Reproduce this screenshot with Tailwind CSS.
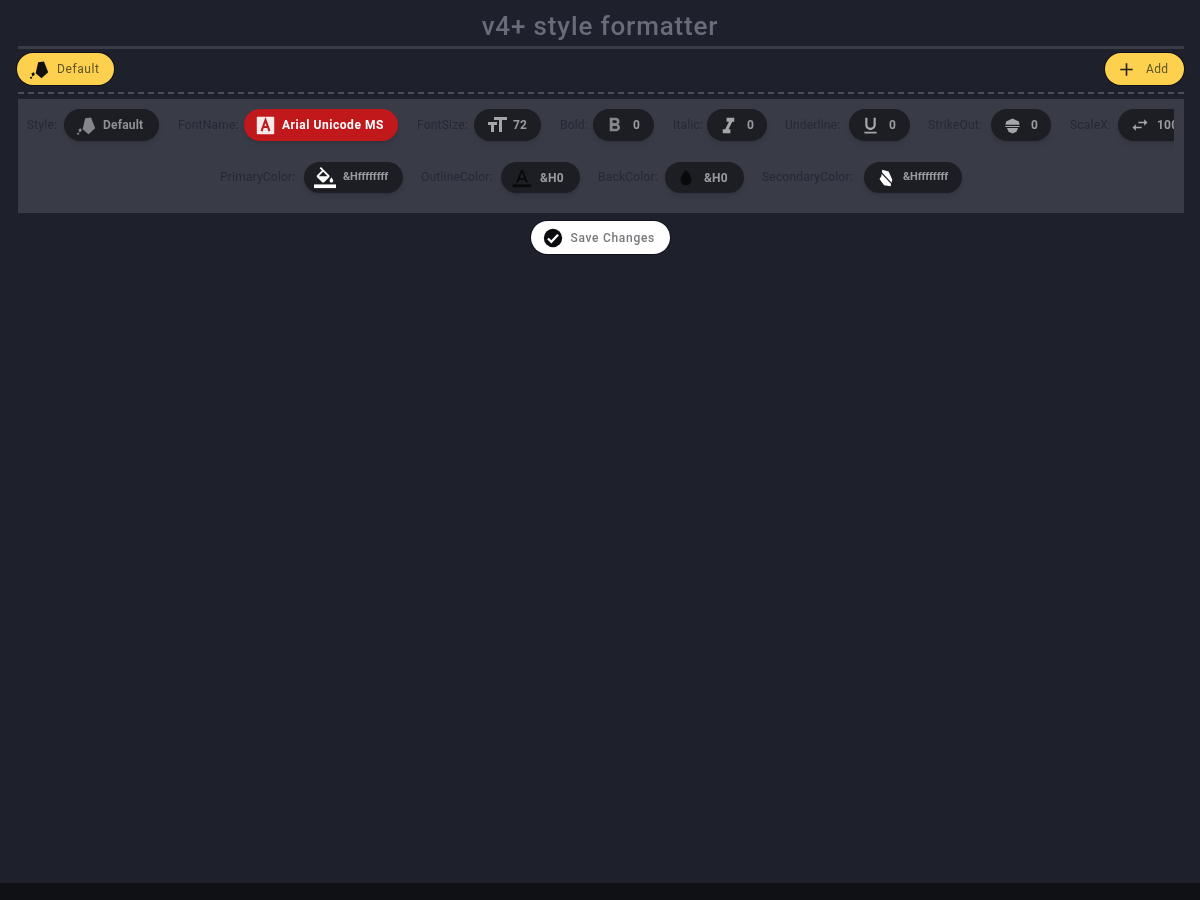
<!DOCTYPE html>
<html>
<head>
<meta charset="utf-8">
<title>v4+ style formatter</title>
<script src="https://cdn.jsdelivr.net/npm/@tailwindcss/browser@4"></script>
</head>
<body class="bg-[#1e202c] font-['Roboto',sans-serif]">
<div class="w-[1200px] h-[900px] flex flex-col overflow-hidden">
  <main class="flex-1 pl-[18px] pr-[16px] blur-[0.7px]">
    <h1 class="h-[46px] mr-[2px] pt-[8px] text-center text-[26px] leading-[36px] tracking-[0.85px] font-medium text-[#686b78]">v4+ style formatter</h1>
    <div class="h-[3px] bg-[#393b47]"></div>
    <div class="h-[40px] -ml-[1px] flex items-center justify-between">
      <button class="h-[32px] w-[97px] pl-[12px] rounded-full bg-[#fdd14d] flex items-center gap-[8px] text-[12px] tracking-[0.6px] text-[#5e5327] shadow-[0_0_0_1px_#10121c]">
        <svg class="w-[20px] h-[20px]" viewBox="0 0 24 24" fill="#111"><path d="M11 4L18 3L23 16L15 23L8 17zM3 17l3-1 1 3-3 2zM1 22l2-1 1 2-2 1z"/></svg>
        <span>Default</span>
      </button>
      <button class="h-[32px] w-[79px] pl-[14px] rounded-full bg-[#fdd14d] flex items-center gap-[12px] text-[12px] tracking-[0.3px] text-[#5e5327] shadow-[0_0_0_1px_#10121c]">
        <svg class="w-[15px] h-[15px]" viewBox="0 0 24 24" fill="none" stroke="#222" stroke-width="2.600"><path d="M12 2v20M2 12h20"/></svg>
        <span>Add</span>
      </button>
    </div>
    <div class="border-t-2 border-dashed border-[#4a4c58] mt-[3px]"></div>
    <section class="mt-[5px] h-[114px] bg-[#393b47]">
      <div class="pl-[9px] mr-[10px] pt-[10px] h-[63px] overflow-hidden flex items-start text-[12px] tracking-[0.2px] text-[#262834]">
        <span class="leading-[32px] w-[37px] shrink-0">Style:</span>
        <div class="h-[32px] w-[95px] shrink-0 pl-[12px] rounded-full bg-[#1d1e23] shadow-md flex items-center gap-[7px] text-[#8f9096] font-bold">
          <svg class="w-[20px] h-[20px]" viewBox="0 0 24 24" fill="#85868b"><path d="M11 4L18 3L23 16L15 23L8 17zM3 17l3-1 1 3-3 2zM1 22l2-1 1 2-2 1z"/></svg><span>Default</span>
        </div>
        <span class="leading-[32px] w-[66px] ml-[19px] shrink-0">FontName:</span>
        <div class="h-[32px] w-[154px] shrink-0 pl-[12px] rounded-full bg-[#c1181c] shadow-md flex items-center gap-[7px] text-white font-bold tracking-[0.55px]">
          <svg class="w-[19px] h-[19px]" viewBox="0 0 24 24"><rect x="1" y="1" width="22" height="22" rx="1" fill="#f5e9ea"/><path d="M7 19l5-14 5 14M9 14h6" fill="none" stroke="#c1181c" stroke-width="2.600"/></svg><span>Arial Unicode MS</span>
        </div>
        <span class="leading-[32px] w-[57px] ml-[19px] shrink-0">FontSize:</span>
        <div class="h-[32px] w-[67px] shrink-0 pl-[11px] rounded-full bg-[#1d1e23] shadow-md flex items-center gap-[4px] text-[#9a9ba0] font-bold">
          <svg class="w-[24px] h-[24px]" viewBox="0 0 24 24" fill="#a5a6aa"><path d="M9 4v3h5v12h3V7h5V4H9zm-6 8h3v7h3v-7h3V9H3v3z"/></svg><span>72</span>
        </div>
        <span class="leading-[32px] w-[33px] ml-[19px] shrink-0">Bold:</span>
        <div class="h-[32px] w-[61px] shrink-0 pl-[10px] rounded-full bg-[#1d1e23] shadow-md flex items-center gap-[7px] text-[#9a9ba0] font-bold">
          <svg class="w-[23px] h-[23px]" viewBox="0 0 24 24" fill="#85868b"><path d="M15.600 10.790c.97-.67 1.650-1.770 1.650-2.790 0-2.260-1.750-4-4-4H7v14h7.040c2.090 0 3.710-1.700 3.710-3.790 0-1.520-.86-2.820-2.150-3.420zM10 6.500h3c.83 0 1.500.67 1.500 1.500s-.67 1.500-1.500 1.500h-3v-3zm3.500 9H10v-3h3.500c.83 0 1.500.67 1.500 1.500s-.67 1.500-1.500 1.500z"/></svg><span>0</span>
        </div>
        <span class="leading-[32px] w-[34px] ml-[19px] shrink-0">Italic:</span>
        <div class="h-[32px] w-[60px] shrink-0 pl-[10px] rounded-full bg-[#1d1e23] shadow-md flex items-center gap-[7px] text-[#9a9ba0] font-bold">
          <svg class="w-[23px] h-[23px]" viewBox="0 0 24 24" fill="#a5a6aa"><path d="M10 4v4h2.500l-4 8H6v4h8v-4h-2l4-8h2V4z"/></svg><span>0</span>
        </div>
        <span class="leading-[32px] w-[64px] ml-[18px] shrink-0">Underline:</span>
        <div class="h-[32px] w-[61px] shrink-0 pl-[11px] rounded-full bg-[#1d1e23] shadow-md flex items-center gap-[8px] text-[#9a9ba0] font-bold">
          <svg class="w-[21px] h-[21px]" viewBox="0 0 24 24" fill="#a5a6aa"><path d="M12 17c3.310 0 6-2.690 6-6V3h-2.500v8c0 1.930-1.570 3.500-3.500 3.500S8.500 12.930 8.500 11V3H6v8c0 3.310 2.690 6 6 6zm-7 2v2h14v-2H5z"/></svg><span>0</span>
        </div>
        <span class="leading-[32px] w-[63px] ml-[18px] shrink-0">StrikeOut:</span>
        <div class="h-[32px] w-[60px] shrink-0 pl-[12px] rounded-full bg-[#1d1e23] shadow-md flex items-center gap-[9px] text-[#9a9ba0] font-bold">
          <svg class="w-[19px] h-[19px]" viewBox="0 0 24 24" fill="#a5a6aa"><path d="M12 3l8 4 1 4H3l1-4zM3 12.500h18v1.500H3zM5 15h14l-2 5-5 2-5-2z"/></svg><span>0</span>
        </div>
        <span class="leading-[32px] w-[48px] ml-[19px] shrink-0">ScaleX:</span>
        <div class="h-[32px] w-[80px] shrink-0 pl-[12px] rounded-full bg-[#1d1e23] shadow-md flex items-center gap-[7px] text-[#9a9ba0] font-bold">
          <svg class="w-[20px] h-[20px]" viewBox="0 0 24 24" fill="#a5a6aa"><path d="M6.990 11L3 15l3.990 4v-3H14v-2H6.990v-3zM21 9l-3.990-4v3H10v2h7.010v3L21 9z"/></svg><span>100</span>
        </div>
      </div>
      <div class="mr-[20px] flex justify-center items-start h-[31px] text-[12px] tracking-[0.2px] text-[#262834]">
        <span class="leading-[31px] w-[84px] shrink-0">PrimaryColor:</span>
        <div class="h-[31px] w-[99px] shrink-0 pl-[10px] rounded-full bg-[#1d1e23] shadow-md flex items-center gap-[7px] text-[11px] tracking-[-0.15px] text-[#9a9ba0] font-bold">
          <svg class="w-[22px] h-[22px]" viewBox="0 0 24 24" fill="#fff"><path d="M16.560 8.940L7.620 0 6.210 1.410l2.380 2.380-5.150 5.150c-.59.59-.59 1.540 0 2.120l5.500 5.500c.29.29.68.44 1.060.44s.77-.15 1.060-.44l5.500-5.500c.59-.58.59-1.530 0-2.120zM5.210 10L10 5.210 14.790 10H5.210zM19 11.500s-2 2.170-2 3.500c0 1.100.9 2 2 2s2-.9 2-2c0-1.330-2-3.500-2-3.500z"/><rect y="19" width="24" height="4"/></svg><span>&amp;Hffffffff</span>
        </div>
        <span class="leading-[31px] w-[80px] ml-[18px] shrink-0">OutlineColor:</span>
        <div class="h-[31px] w-[79px] shrink-0 pl-[10px] rounded-full bg-[#1d1e23] shadow-md flex items-center gap-[7px] text-[#9a9ba0] font-bold">
          <svg class="w-[22px] h-[22px]" viewBox="0 0 24 24" fill="#08090b"><path d="M11 3L5.500 17h2.250l1.120-3h6.250l1.120 3h2.250L13 3h-2zm-1.380 9L12 5.670 14.380 12H9.620z"/><rect x="2" y="19" width="20" height="3"/></svg><span>&amp;H0</span>
        </div>
        <span class="leading-[31px] w-[67px] ml-[18px] shrink-0">BackColor:</span>
        <div class="h-[31px] w-[79px] shrink-0 pl-[10px] rounded-full bg-[#1d1e23] shadow-md flex items-center gap-[7px] text-[#9a9ba0] font-bold">
          <svg class="w-[22px] h-[22px]" viewBox="0 0 24 24" fill="#08090b"><path d="M12 3s-6 6.500-6 11a6 6 0 0 0 12 0c0-4.500-6-11-6-11z"/></svg><span>&amp;H0</span>
        </div>
        <span class="leading-[31px] w-[102px] ml-[18px] shrink-0">SecondaryColor:</span>
        <div class="h-[31px] w-[98px] shrink-0 pl-[10px] rounded-full bg-[#1d1e23] shadow-md flex items-center gap-[7px] text-[11px] tracking-[-0.15px] text-[#9a9ba0] font-bold">
          <svg class="w-[22px] h-[22px]" viewBox="0 0 24 24" fill="#fff"><path d="M9 3l7 2 4 9-2 7-7-1-5-7 2-3z"/><path d="M4 3l1-1 16 17-1 1z" fill="#1d1e23"/></svg><span>&amp;Hffffffff</span>
        </div>
      </div>
    </section>
    <div class="mt-[8px] flex justify-center -ml-[18px] -mr-[16px]">
      <button class="h-[33px] w-[139px] pl-[11px] rounded-full bg-white flex items-center gap-[7px] text-[12px] tracking-[0.7px] text-[#77787c] font-medium shadow-[0_0_0_1px_#10121c]">
        <svg class="w-[22px] h-[22px]" viewBox="0 0 24 24"><circle cx="12" cy="12" r="10" fill="#0c0c10"/><path d="M6.500 12.500l3.700 3.700 7.300-7.700" fill="none" stroke="#fff" stroke-width="2.400"/></svg>
        <span>Save Changes</span>
      </button>
    </div>
  </main>
  <footer class="h-[17px] bg-[#101114]"></footer>
</div>
</body>
</html>
